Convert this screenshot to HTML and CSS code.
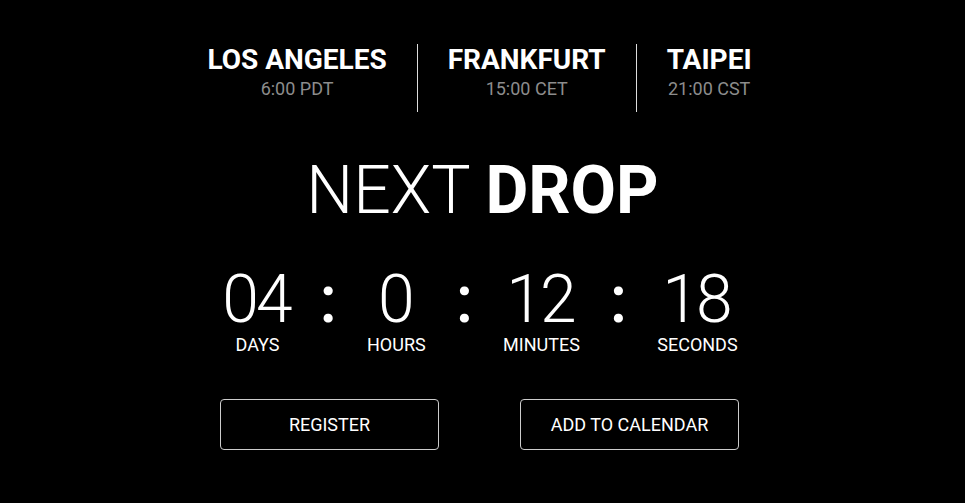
FILE: index.html
```html
<!DOCTYPE html>
<html>
  <head>
    <meta http-equiv="content-type" content="text/html; charset=UTF-8">
    <title>Next Drop</title>
    <link rel="stylesheet" href="styles.css">
  </head>
  <body>
    <div id="container">
      <!-- Cities -->
      <div class="cities">
        <div class="city">
          <div class="city-name">LOS ANGELES</div>
          <div class="city-time">6:00 PDT</div>
        </div>
        <div class="city">
          <div class="city-name">FRANKFURT</div>
          <div class="city-time">15:00 CET</div>
        </div>
        <div class="city">
          <div class="city-name">TAIPEI</div>
          <div class="city-time">21:00 CST</div>
        </div>
      </div>
      <!-- Title -->
      <h1 class="title">NEXT <b>DROP</b></h1>
      <!-- Countdown -->
      <div class="countdown">
        <div class="unit">
          <div class="num">04</div>
          <div class="label">DAYS</div>
        </div>
        <div class="colon">:</div>
        <div class="unit">
          <div class="num">0</div>
          <div class="label">HOURS</div>
        </div>
        <div class="colon">:</div>
        <div class="unit">
          <div class="num">12</div>
          <div class="label">MINUTES</div>
        </div>
        <div class="colon">:</div>
        <div class="unit">
          <div class="num">18</div>
          <div class="label">SECONDS</div>
        </div>
      </div>
      <!-- Buttons -->
      <div class="buttons">
        <a class="btn" href="#">REGISTER</a>
        <a class="btn" href="#">ADD TO CALENDAR</a>
      </div>
    </div>
  </body>
</html>
```
FILE: styles.css
```css
body {
  margin: 0;
  background-color: #000;
  color: #fff;
  font-family: Roboto, "Liberation Sans", sans-serif;
}
#container {
  display: flex;
  flex-direction: column;
  align-items: center;
  padding-top: 44px;
}
.cities {
  display: flex;
  margin-right: 6px;
}
.city {
  padding: 0 30px 12px;
  text-align: center;
}
.city + .city {
  border-left: 1px solid #ddd;
}
.city-name {
  font-size: 28px;
  line-height: 32px;
  font-weight: 700;
}
.city-time {
  margin-top: 2px;
  font-size: 18px;
  line-height: 22px;
  color: #8c8c8c;
}
.title {
  margin: 47px 0 0;
  font-size: 66px;
  line-height: 64px;
  font-weight: 300;
}
.title b {
  font-weight: 700;
}
.countdown {
  display: flex;
  align-items: flex-start;
  gap: 30px;
  margin-top: 44px;
  margin-right: 2px;
}
.unit {
  display: flex;
  flex-direction: column;
  align-items: center;
}
.num, .colon {
  font-size: 66px;
  line-height: 66px;
  font-weight: 300;
}
.num {
  letter-spacing: -3px;
  text-indent: -3px;
}
.colon {
  font-weight: 500;
}
.label {
  margin-top: 1px;
  font-size: 18px;
  line-height: 22px;
}
.buttons {
  display: flex;
  gap: 81px;
  margin-top: 43px;
  margin-right: 6px;
}
.btn {
  display: flex;
  align-items: center;
  justify-content: center;
  width: 219px;
  height: 51px;
  box-sizing: border-box;
  border: 1px solid #ccc;
  border-radius: 4px;
  color: #fff;
  text-decoration: none;
  font-size: 18px;
}
```
